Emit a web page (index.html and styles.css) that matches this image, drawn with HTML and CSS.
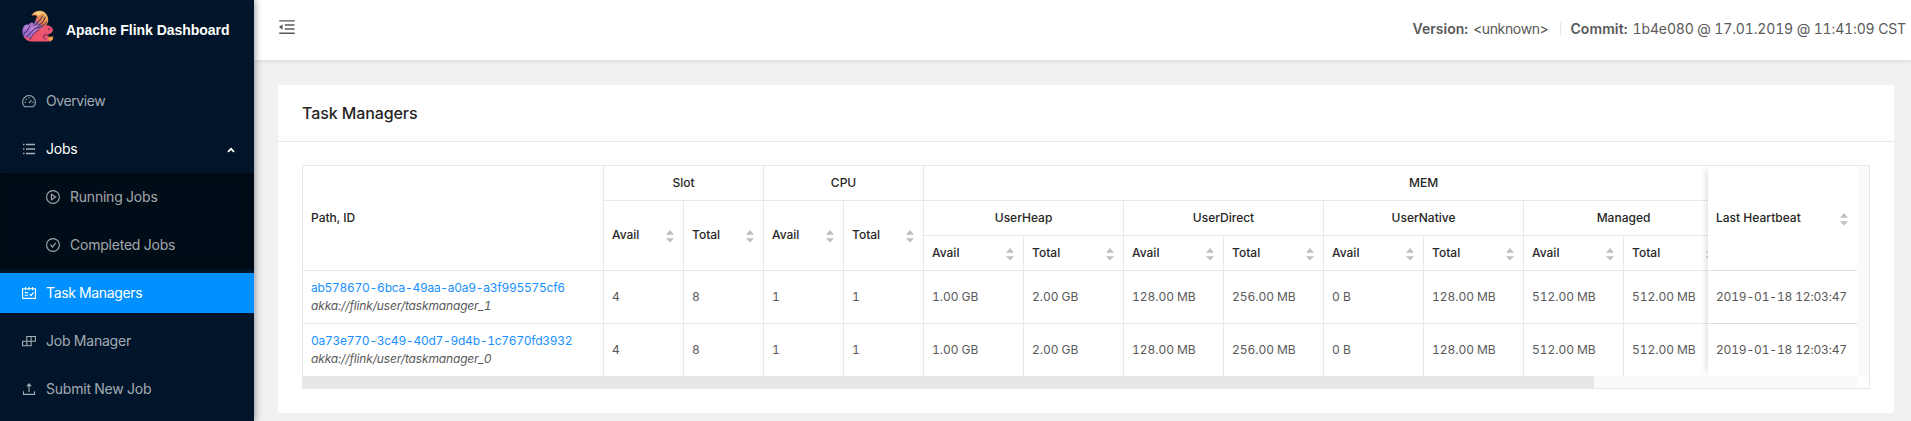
FILE: index.html
```
<!DOCTYPE html>
<html lang="en">
<head>
<meta charset="utf-8">
<title>Apache Flink Dashboard</title>
<link rel="stylesheet" href="styles.css">
</head>
<body>
<svg class="defs" width="0" height="0">
  <symbol id="sort" viewBox="0 0 8 13"><path d="M4 0 8 4.800H0zM4 12.600 0 8.200h8z"/></symbol>
</svg>
<div class="layout">
  <aside class="sider">
    <div class="logo">
      <svg class="squirrel" viewBox="0 0 32 32" width="32" height="32">
        <defs><linearGradient id="tail" x1="0" y1="1" x2=".8" y2="0"><stop offset="0" stop-color="#7e57b5"/><stop offset=".45" stop-color="#b678d6"/><stop offset=".62" stop-color="#8d62ad"/><stop offset=".72" stop-color="#e0734f"/><stop offset="1" stop-color="#f6b75c"/></linearGradient></defs>
        <path fill="url(#tail)" d="M7 31C2 29-.3 24 .5 19.500 1 15.500 4.500 13.500 7 15 8 12 10.500 12 12 14 12.500 11 14.500 9 15 6.500 13.500 4.800 11.500 5 9.500 5.800 11 2 16 0 20.500 1.200 24.500 2.500 27 7 26 12.500L23.500 16 14 22 9 31z"/>
        <path fill="#f7cf7e" d="M10 4.800C14 1 20 .6 23 3.500 20 3 18.500 4 17 6 15 3.800 12.500 4 10 4.800z"/>
        <path fill="#ee5370" d="M7.500 31.500C8.500 27 11.500 23 16 20 19 18 21 17.500 22.500 16.500L24 14.200 25.500 15.500C28.500 15.500 31 18 31 20.500 30.500 23 28 24 26 24.500L27 28 28 31.500H9C4 30.500 2 28 1.500 25 3.500 28 5.500 28 7.500 27z"/>
        <path fill="none" stroke="#29234a" stroke-width=".9" stroke-linecap="round" d="M2 23.500C5.500 22 6.500 18 8 16M5 27C9 23 11 18.500 16 17.500 20 16.500 23 14.500 25 12M12.500 15.500C15 12.500 18.500 11 20.500 6M17 15C20.500 13 22.500 11 23 7"/>
        <path fill="none" stroke="#d9a3ea" stroke-width=".8" d="M2.500 19.500C4 16 5 16.500 6 17.500M9.500 19.500C11.500 17 13 16.500 15 16"/>
        <path fill="none" stroke="#4a2448" stroke-width=".9" stroke-linecap="round" d="M8 29.500C10 25 13 22 17 20M23.500 29.500C21 28 21 25 23.500 24M24 25.200h3"/>
        <circle cx="27" cy="19" r=".8" fill="#29234a"/>
        <path fill="#f4a550" d="M26.500 26.500 31.300 26 30.800 29.500 28.500 31.500 26.500 29.500z"/>
        <path stroke="#5d2a24" stroke-width="1" d="M26.500 26.800 31.500 26.200"/>
      </svg>
      <h1 class="brand">Apache Flink Dashboard</h1>
    </div>
    <nav class="menu">
      <a class="item overview"><svg class="ico" viewBox="0 0 14 14"><path d="M2.700 12.700A6.400 6.400 0 1 1 11.300 12.700ZM6.900 8.800 9.500 6.100M7 3v1.600M2.500 8.200H4M10.200 8.200h1.500M3.800 4.900l1 1"/></svg><span>Overview</span></a>
      <a class="item open"><svg class="ico thick" viewBox="0 0 14 14"><path d="M4 2.500h9M4 7h9M4 11.500h9M1 2.500h1.500M1 7h1.500M1 11.500h1.500"/></svg><span>Jobs</span><svg class="caret" viewBox="0 0 8 6" width="8" height="6"><path d="M1 4.800 4 1.800 7 4.800"/></svg></a>
      <div class="sub">
        <a class="item"><svg class="ico" viewBox="0 0 14 14"><circle cx="7" cy="7" r="6.400"/><path d="M5.400 4.300v5.400L9.600 7z"/></svg><span>Running Jobs</span></a>
        <a class="item"><svg class="ico" viewBox="0 0 14 14"><circle cx="7" cy="7" r="6.400"/><path d="M4.400 6.700 6.500 9.200 9.700 4.900"/></svg><span>Completed Jobs</span></a>
      </div>
      <a class="item selected"><svg class="ico" viewBox="0 0 14 14"><path d="M.6 2.700h12.800v9.700H.6zM3.500.9v3.300M7 .9v3.300M10.500.9v3.300M2.700 6.600h3.300M2.700 9.200h3.300M7.500 8 9 9.700l2.600-3.400"/></svg><span>Task Managers</span></a>
      <a class="item"><svg class="ico" viewBox="0 0 14 14"><path d="M4.800 2.500h8.600v4.700H4.800zM9.100 2.500v9.200M.6 7.200h8.500v4.500H.6zM4.800 7.200v4.500"/></svg><span>Job Manager</span></a>
      <a class="item"><svg class="ico" viewBox="0 0 14 14"><path d="M1.500 9.200v3.200h11V9.200M7 10V2.400M4.900 4.300 7 1.800 9.100 4.300"/></svg><span>Submit New Job</span></a>
    </nav>
  </aside>
  <div class="main">
    <header class="header">
      <svg class="fold" viewBox="0 0 1024 1024" width="20" height="20"><path d="M408 442h480c4.400 0 8-3.600 8-8v-56c0-4.400-3.600-8-8-8H408c-4.400 0-8 3.600-8 8v56c0 4.400 3.600 8 8 8zm-8 204c0 4.400 3.600 8 8 8h480c4.400 0 8-3.600 8-8v-56c0-4.400-3.600-8-8-8H408c-4.400 0-8 3.600-8 8v56zm504-486H120c-4.400 0-8 3.600-8 8v56c0 4.400 3.600 8 8 8h784c4.400 0 8-3.600 8-8v-56c0-4.400-3.600-8-8-8zm0 632H120c-4.400 0-8 3.600-8 8v56c0 4.400 3.600 8 8 8h784c4.400 0 8-3.600 8-8v-56c0-4.400-3.600-8-8-8zM115 519l157 123c6 5 14 1 14-7V389c0-7-8-12-14-7L115 505a9 9 0 0 0 0 14z"/></svg>
      <div class="info">
        <strong class="version">Version:</strong><span class="unknown">&lt;unknown&gt;</span><i class="divider"></i><strong class="commit">Commit:</strong><span class="hash">1b4e080 @ 17.01.2019 @ 11:41:09 CST</span>
      </div>
    </header>
    <main class="content">
      <section class="card">
        <h2 class="card-title">Task Managers</h2>
        <div class="card-body">
          <div class="table-box">
            <div class="panes">
              <div class="scroll">
                <table class="grid">
                  <colgroup><col class="c-path"><col class="c-80" span="4"><col class="c-100" span="10"></colgroup>
                  <thead>
                    <tr><th rowspan="3">Path, ID</th><th class="mid" colspan="2">Slot</th><th class="mid" colspan="2">CPU</th><th class="mid" colspan="10">MEM</th></tr>
                    <tr>
                      <th rowspan="2"><div class="s tall">Avail<svg><use href="#sort"/></svg></div></th><th rowspan="2"><div class="s tall">Total<svg><use href="#sort"/></svg></div></th><th rowspan="2"><div class="s tall">Avail<svg><use href="#sort"/></svg></div></th><th rowspan="2"><div class="s tall">Total<svg><use href="#sort"/></svg></div></th>
                      <th class="mid" colspan="2">UserHeap</th><th class="mid" colspan="2">UserDirect</th><th class="mid" colspan="2">UserNative</th><th class="mid" colspan="2">Managed</th><th colspan="2"></th>
                    </tr>
                    <tr>
                      <th><div class="s">Avail<svg><use href="#sort"/></svg></div></th><th><div class="s">Total<svg><use href="#sort"/></svg></div></th><th><div class="s">Avail<svg><use href="#sort"/></svg></div></th><th><div class="s">Total<svg><use href="#sort"/></svg></div></th><th><div class="s">Avail<svg><use href="#sort"/></svg></div></th><th><div class="s">Total<svg><use href="#sort"/></svg></div></th><th><div class="s">Avail<svg><use href="#sort"/></svg></div></th><th><div class="s">Total<svg><use href="#sort"/></svg></div></th><th></th><th></th>
                    </tr>
                  </thead>
                  <tbody>
                    <tr><td><a class="uuid">ab578670-6bca-49aa-a0a9-a3f995575cf6</a><em class="path">akka://flink/user/taskmanager_1</em></td><td>4</td><td>8</td><td>1</td><td>1</td><td>1.00 GB</td><td>2.00 GB</td><td>128.00 MB</td><td>256.00 MB</td><td>0 B</td><td>128.00 MB</td><td>512.00 MB</td><td>512.00 MB</td><td></td><td></td></tr>
                    <tr><td><a class="uuid">0a73e770-3c49-40d7-9d4b-1c7670fd3932</a><em class="path">akka://flink/user/taskmanager_0</em></td><td>4</td><td>8</td><td>1</td><td>1</td><td>1.00 GB</td><td>2.00 GB</td><td>128.00 MB</td><td>256.00 MB</td><td>0 B</td><td>128.00 MB</td><td>512.00 MB</td><td>512.00 MB</td><td></td><td></td></tr>
                  </tbody>
                </table>
              </div>
              <div class="fixed">
                <div class="f-head"><div class="s">Last Heartbeat<svg><use href="#sort"/></svg></div></div>
                <div class="f-cell">2019-01-18 12:03:47</div>
                <div class="f-cell last">2019-01-18 12:03:47</div>
              </div>
              <div class="vbar"></div>
            </div>
            <div class="hbar"><div class="thumb"></div><div class="track"></div><div class="corner"></div></div>
          </div>
        </div>
      </section>
    </main>
  </div>
</div>
</body>
</html>
```
FILE: styles.css
```
* { box-sizing: border-box; }
body {
  margin: 0;
  height: 421px;
  overflow: hidden;
  font: 14px/21px Inter, "Liberation Sans", sans-serif;
  font-variant-numeric: tabular-nums;
  color: #595959;
}
.defs { display: block; }
.layout { display: flex; height: 421px; background: #f1f1f1; }

/* sidebar */
.sider {
  width: 254px;
  flex: none;
  z-index: 2;
  background: #001529;
  box-shadow: 2px 0 6px rgba(0, 21, 41, .35);
}
.logo { display: flex; align-items: flex-start; height: 77px; padding: 10px 0 0 22px; }
.brand {
  margin: 10px 0 0 12px;
  font: 600 14px/20px "Liberation Sans", sans-serif;
  letter-spacing: -.03px;
  color: #fff;
}
.item {
  display: flex;
  align-items: center;
  height: 40px;
  margin: 4px 0 8px;
  padding-left: 22px;
  color: rgba(255, 255, 255, .65);
  letter-spacing: -.22px;
}
.item span { padding-bottom: 2px; }
.overview { letter-spacing: -.4px; }
.ico {
  width: 14px;
  height: 14px;
  margin-right: 10px;
  fill: none;
  stroke: currentColor;
  stroke-width: 1.1;
}
.ico.thick { stroke-width: 1.5; }
.open { margin-bottom: 4px; color: #fff; }
.open .ico { stroke: rgba(255, 255, 255, .65); }
.caret { margin: 1px 19px 0 auto; fill: none; stroke: #fff; stroke-width: 1.8; }
.sub { display: flow-root; height: 96px; background: #000c17; box-shadow: inset 0 2px 8px rgba(0, 0, 0, .25); }
.sub .item { padding-left: 46px; }
.selected { background: #0090ff; color: #fff; letter-spacing: -.35px; }

/* header */
.main { flex: 1; min-width: 0; }
.header {
  position: relative;
  display: flex;
  justify-content: space-between;
  height: 60px;
  padding: 17px 5px 0 23px;
  background: #fff;
  box-shadow: 0 1px 4px rgba(0, 21, 41, .12);
}
.fold { fill: #595959; }
.info { display: flex; align-items: center; height: 23px; }
.version, .commit { font-weight: 600; }
.commit { letter-spacing: .1px; }
.unknown { margin-left: 5px; letter-spacing: -.35px; }
.divider { width: 1px; height: 13px; margin: 0 9px 0 12px; background: #e8e8e8; }
.hash { margin-left: 5px; letter-spacing: -.14px; }

/* card */
.content { padding: 25px 17px 0 24px; }
.card { height: 328px; border-radius: 2px; background: #fff; }
.card-title {
  height: 57px;
  margin: 0;
  padding: 0 24px;
  border-bottom: 1px solid #e8e8e8;
  font-size: 16px;
  font-weight: 500;
  line-height: 56px;
  letter-spacing: -.1px;
  color: #262626;
}
.card-body { padding: 23px 24px 0; }
.table-box { border: 1px solid #e8e8e8; font-size: 12px; line-height: 18px; }
.panes { display: flex; height: 210px; }
.scroll { flex: 1; min-width: 0; overflow: hidden; }
.grid { width: 1621px; table-layout: fixed; border-spacing: 0; }
.c-path { width: 301px; }
.c-80 { width: 80px; }
.c-100 { width: 100px; }
th, td {
  padding: 0 8px;
  border-right: 1px solid #e8e8e8;
  border-bottom: 1px solid #e8e8e8;
  text-align: left;
}
th { height: 35px; font-weight: 500; color: #262626; }
td { height: 53px; letter-spacing: -.05px; }
tbody tr:last-child td { padding-bottom: 1px; border-bottom: 0; }
.mid { text-align: center; }
.s { display: flex; align-items: center; justify-content: space-between; }
.s svg { width: 8px; height: 13px; margin-top: 3px; fill: #bfbfbf; }
th .s { padding-right: 1px; }
.tall { padding-bottom: 1px; }
.uuid { display: block; letter-spacing: -.27px; color: #1890ff; }
.path { display: block; letter-spacing: -.15px; }

/* pinned column and scrollbars */
.fixed {
  width: 149px;
  z-index: 1;
  background: #fff;
  box-shadow: -6px 0 6px -4px rgba(0, 0, 0, .12);
}
.f-head {
  display: grid;
  align-items: center;
  height: 105px;
  padding: 0 9px 0 8px;
  border-bottom: 1px solid #e2e2e2;
  font-weight: 500;
  color: #262626;
}
.f-cell {
  display: flex;
  align-items: center;
  height: 53px;
  padding-left: 8px;
  border-bottom: 1px solid #dedede;
  letter-spacing: -.17px;
}
.f-cell.last { padding-bottom: 1px; border-bottom: 0; }
.vbar { width: 12px; background: #fafafa; }
.hbar { display: flex; height: 12px; }
.thumb { width: 1291px; background: #e7e7e7; }
.track { flex: 1; background: #fafafa; }
.corner { width: 12px; background: #fff; }
```
